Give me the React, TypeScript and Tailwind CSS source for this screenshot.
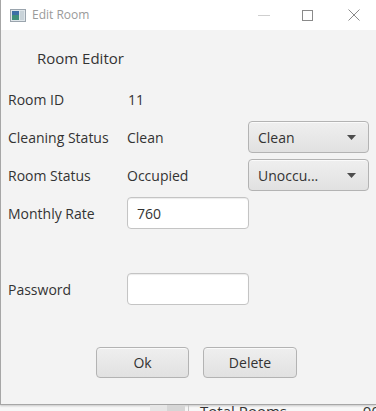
import React from "react";

const font = { fontFamily: '"Open Sans", "Noto Sans", sans-serif' };

function ComboBox({ value }: { value: string }) {
  return (
    <div className="flex h-[32px] w-[121px] items-center justify-between rounded-[4px] border border-[#b3b3b3] bg-gradient-to-b from-[#efefef] to-[#e1e1e1] pl-[9px] pr-[12px] text-[14px] text-[#333] shadow-[inset_0_1px_0_#fafafa]">
      <span>{value}</span>
      <svg width="9" height="5" viewBox="0 0 9 5">
        <path d="M0 0 H9 L4.5 5 Z" fill="#4d4d4d" />
      </svg>
    </div>
  );
}

function TextField({ value }: { value?: string }) {
  return (
    <div className="flex h-[32px] w-[122px] items-center rounded-[4px] border border-[#c4c4c4] bg-white pl-[9px] text-[14px] text-[#333] shadow-[inset_0_1px_1px_#ececec]">
      {value}
    </div>
  );
}

function Button({ label, width }: { label: string; width: string }) {
  return (
    <button
      type="button"
      className={`flex h-[31px] ${width} items-center justify-center rounded-[4px] border border-[#b3b3b3] bg-gradient-to-b from-[#efefef] to-[#e1e1e1] text-[14px] text-[#333] shadow-[inset_0_1px_0_#fafafa]`}
    >
      {label}
    </button>
  );
}

function Row({ label, children }: { label: string; children?: React.ReactNode }) {
  return (
    <div className="flex h-[32px] items-center">
      <span className="w-[126px] shrink-0 pl-[7px]">{label}</span>
      {children}
    </div>
  );
}

export default function App() {
  return (
    <div className="flex h-[411px] w-[376px] flex-col overflow-hidden bg-[#f7f7f7]" style={font}>
      <div className="flex h-[405px] shrink-0 flex-col border-b border-l border-[#a6a6a6] bg-[#f3f3f3] shadow-[0_1px_2px_rgba(0,0,0,0.2)]">
        <div className="flex h-[30px] shrink-0 items-center bg-white">
          <svg className="ml-[9px]" width="16" height="13" viewBox="0 0 16 13">
            <rect x="0.5" y="0.5" width="15" height="12" fill="#dfe6ea" stroke="#9aa4ad" />
            <rect x="2" y="2" width="7" height="9" fill="#3f8f7a" />
            <rect x="2" y="2" width="7" height="4" fill="#3c6fa6" />
            <rect x="10" y="2" width="4" height="9" fill="#c9d3d9" />
          </svg>
          <span className="ml-[6px] text-[12px] text-[#9a9a9a]">Edit Room</span>
          <div className="ml-auto flex items-center">
            <div className="mr-[32px] h-px w-[12px] bg-[#cfcfcf]" />
            <div className="mr-[35px] h-[11px] w-[11px] border border-[#8a8a8a]" />
            <svg className="mr-[16px]" width="12" height="12" viewBox="0 0 12 12">
              <path d="M0.5 0.5 L11.5 11.5 M11.5 0.5 L0.5 11.5" stroke="#8a8a8a" strokeWidth="1" />
            </svg>
          </div>
        </div>

        <div className="flex flex-col text-[14px] text-[#333]">
          <div className="mt-[17px] flex h-[22px] items-center pl-[36px] text-[15px]">Room Editor</div>

          <div className="mt-[14px] flex flex-col gap-[6px]">
            <Row label="Room ID">
              <span className="pl-[1px]">11</span>
            </Row>
            <Row label="Cleaning Status">
              <span className="w-[121px] shrink-0">Clean</span>
              <ComboBox value="Clean" />
            </Row>
            <Row label="Room Status">
              <span className="w-[121px] shrink-0">Occupied</span>
              <ComboBox value="Unoccu..." />
            </Row>
            <Row label="Monthly Rate">
              <TextField value="760" />
            </Row>
          </div>

          <div className="mt-[44px]">
            <Row label="Password">
              <TextField />
            </Row>
          </div>

          <div className="mt-[42px] flex gap-[14px] pl-[95px]">
            <Button label="Ok" width="w-[93px]" />
            <Button label="Delete" width="w-[94px]" />
          </div>
        </div>
      </div>

      <div className="relative flex h-[6px] items-start overflow-hidden">
        <div className="ml-[150px] h-full w-[17px] bg-[#e6e6e6]" />
        <div className="h-full w-[18px] bg-[#d6d6d6]" />
        <div className="ml-[3px] h-full w-px bg-[#c8c8c8]" />
        <span className="ml-[11px] mt-[-4px] text-[15px] leading-[20px] text-[#333]">Total Rooms</span>
        <span className="ml-auto mr-[-4px] mt-[-4px] text-[15px] leading-[20px] text-[#333]">00</span>
      </div>
    </div>
  );
}
